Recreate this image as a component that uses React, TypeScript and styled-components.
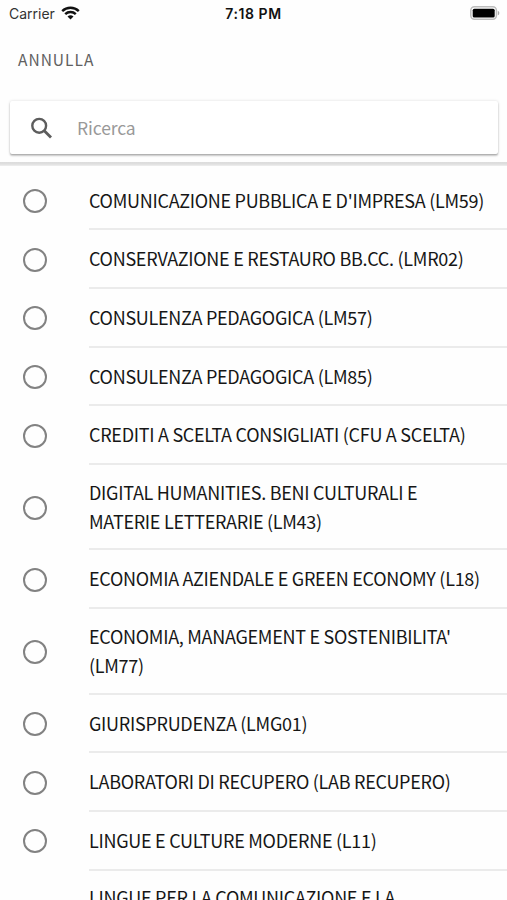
import React from "react";
import styled, { createGlobalStyle } from "styled-components";

const GlobalStyle = createGlobalStyle`
  *, *::before, *::after { box-sizing: border-box; }
  body {
    margin: 0;
    overflow: hidden;
    background: #fefefe;
    color: #161616;
    font-family: "Noto Sans CJK SC", "Noto Sans", sans-serif;
  }
`;

const Screen = styled.main`
  height: 900px;
  overflow: hidden;
  display: flex;
  flex-direction: column;
  background: #fefefe;
`;

const StatusBar = styled.div`
  flex: none;
  height: 28px;
  padding: 0 7px 0 9px;
  display: grid;
  grid-template-columns: 1fr auto 1fr;
  align-items: center;
  font-family: Inter, sans-serif;
  font-size: 14px;
  line-height: 28px;
`;

const Carrier = styled.div`
  display: flex;
  align-items: center;
  gap: 6px;
  color: #333;
  svg { margin-bottom: 2px; }
`;

const Clock = styled.div`
  padding-right: 2px;
  font-size: 14px;
  font-weight: 600;
  letter-spacing: 0.55px;
  color: #111;
`;

const Battery = styled.svg`
  justify-self: end;
  margin-bottom: 2px;
`;

const Toolbar = styled.header`
  flex: none;
  height: 73px;
  padding: 17px 18px 0;
`;

const CancelButton = styled.button`
  display: block;
  border: 0;
  padding: 0;
  background: none;
  font: inherit;
  font-size: 15.5px;
  line-height: 28px;
  letter-spacing: 1px;
  color: #606060;
`;

const SearchArea = styled.div`
  flex: none;
  height: 61px;
  padding: 0 9px 0 10px;
`;

const SearchBox = styled.label`
  height: 53px;
  display: flex;
  align-items: center;
  gap: 24px;
  padding-left: 20px;
  border-radius: 2px;
  background: #fff;
  box-shadow: 0 2px 2px rgba(0, 0, 0, 0.2), 0 1px 1px rgba(0, 0, 0, 0.1), 0 0 3px rgba(0, 0, 0, 0.14);
  svg { margin-top: 2px; }
`;

const SearchInput = styled.input`
  width: 300px;
  border: 0;
  padding: 0;
  outline: 0;
  background: none;
  font: inherit;
  font-size: 17.5px;
  line-height: 28px;
  letter-spacing: -0.1px;
  &::placeholder { color: #999; opacity: 1; }
`;

const Divider = styled.div`
  flex: none;
  height: 4px;
  background: linear-gradient(#dcdcdc, #dfdfdf 50%, #efefef);
`;

const List = styled.ul`
  flex: none;
  list-style: none;
  margin: 0;
  padding: 5.7px 0 0;
`;

const Row = styled.li`
  display: flex;
  align-items: center;
  padding-left: 23px;
`;

const Radio = styled.span`
  flex: none;
  width: 24px;
  height: 24px;
  margin-right: 42px;
  border: 2px solid #828282;
  border-radius: 50%;
`;

const Label = styled.span<{ $lines: number }>`
  flex: 1;
  height: ${({ $lines }) => ($lines > 1 ? 85.6 : 58.65)}px;
  padding-top: ${({ $lines }) => ($lines > 1 ? 12.8 : 14)}px;
  border-bottom: 2px solid #ebebeb;
  font-size: 18px;
  line-height: 29px;
  letter-spacing: -0.285px;
  white-space: pre-line;
`;

const courses = [
  "COMUNICAZIONE PUBBLICA E D'IMPRESA (LM59)",
  "CONSERVAZIONE E RESTAURO BB.CC. (LMR02)",
  "CONSULENZA PEDAGOGICA (LM57)",
  "CONSULENZA PEDAGOGICA (LM85)",
  "CREDITI A SCELTA CONSIGLIATI (CFU A SCELTA)",
  "DIGITAL HUMANITIES. BENI CULTURALI E\nMATERIE LETTERARIE (LM43)",
  "ECONOMIA AZIENDALE E GREEN ECONOMY (L18)",
  "ECONOMIA, MANAGEMENT E SOSTENIBILITA'\n(LM77)",
  "GIURISPRUDENZA (LMG01)",
  "LABORATORI DI RECUPERO (LAB RECUPERO)",
  "LINGUE E CULTURE MODERNE (L11)",
  "LINGUE PER LA COMUNICAZIONE E LA\n",
];

export default function App() {
  return (
    <Screen>
      <GlobalStyle />
      <StatusBar>
        <Carrier>
          Carrier
          <svg width="19" height="14" viewBox="0 0 19 14" fill="none" stroke="#111" strokeWidth="2.4">
            <path d="M1.2 5.1a12 12 0 0 1 16.6 0M4.2 8.2a7.6 7.6 0 0 1 10.6 0" />
            <path d="M6.5 10.6a4.3 4.3 0 0 1 6 0l-3 3z" fill="#111" stroke="none" />
          </svg>
        </Carrier>
        <Clock>7:18 PM</Clock>
        <Battery width="30" height="14" viewBox="0 0 30 14">
          <rect x=".8" y=".8" width="25.6" height="12.4" rx="3.6" fill="#fff" stroke="#bdbdbd" strokeWidth="1.5" />
          <rect x="2.7" y="2.7" width="22" height="8.8" rx="1.6" fill="#000" />
          <path d="M27.8 4.7c2 .8 2 3.8 0 4.6z" fill="#aaa" />
        </Battery>
      </StatusBar>
      <Toolbar>
        <CancelButton>ANNULLA</CancelButton>
      </Toolbar>
      <SearchArea>
        <SearchBox>
          <svg width="23" height="23" viewBox="0 0 23 23" fill="none" stroke="#5d5d5d" strokeWidth="2.4">
            <circle cx="9.2" cy="8.8" r="6.9" />
            <path d="m14 13.6 7 7" strokeWidth="2.8" />
          </svg>
          <SearchInput placeholder="Ricerca" />
        </SearchBox>
      </SearchArea>
      <Divider />
      <List>
        {courses.map((course) => (
          <Row key={course}>
            <Radio />
            <Label $lines={course.split("\n").length}>{course}</Label>
          </Row>
        ))}
      </List>
    </Screen>
  );
}
